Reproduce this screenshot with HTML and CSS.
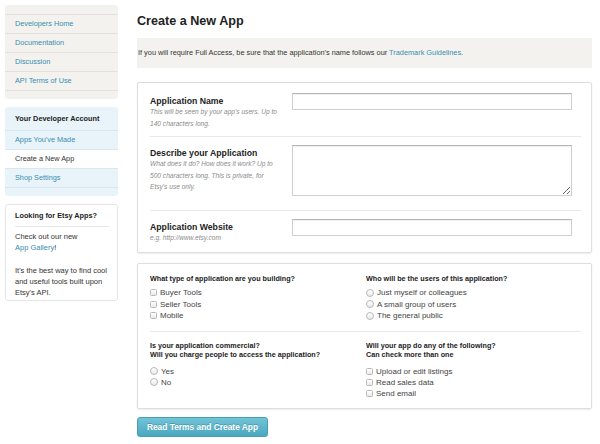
FILE: index.html
```html
<!DOCTYPE html>
<html lang="en">
<head>
<meta charset="utf-8">
<title>Create a New App</title>
<link rel="stylesheet" href="styles.css">
</head>
<body>
<div class="page">
  <aside class="sidebar">
    <nav class="box box-beige">
      <ul class="menu">
        <li><a href="#">Developers Home</a></li>
        <li><a href="#">Documentation</a></li>
        <li><a href="#">Discussion</a></li>
        <li><a href="#">API Terms of Use</a></li>
      </ul>
    </nav>
    <nav class="box box-blue">
      <div class="menu-title">Your Developer Account</div>
      <ul class="menu">
        <li><a href="#">Apps You've Made</a></li>
        <li class="current">Create a New App</li>
        <li><a href="#">Shop Settings</a></li>
      </ul>
    </nav>
    <div class="box box-white promo">
      <div class="promo-title">Looking for Etsy Apps?</div>
      <p class="promo-text">Check out our new<br><a href="#">App Gallery</a>!</p>
      <p class="promo-text">It's the best way to find cool and useful tools built upon Etsy's API.</p>
    </div>
  </aside>

  <main class="content">
    <h1 class="title">Create a New App</h1>
    <div class="notice">If you will require Full Access, be sure that the application's name follows our <a href="#">Trademark Guidelines</a>.</div>

    <form class="app-form">
      <div class="panel">
        <div class="field field-first">
          <div class="field-label">
            <div class="label">Application Name</div>
            <div class="hint">This will be seen by your app's users. Up to 140 characters long.</div>
          </div>
          <input class="text-input" type="text">
        </div>
        <div class="field field-mid">
          <div class="field-label">
            <div class="label">Describe your Application</div>
            <div class="hint">What does it do? How does it work? Up to 500 characters long. This is private, for Etsy's use only.</div>
          </div>
          <textarea class="text-area"></textarea>
        </div>
        <div class="field field-last">
          <div class="field-label">
            <div class="label">Application Website</div>
            <div class="hint">e.g. http://www.etsy.com</div>
          </div>
          <input class="text-input" type="text">
        </div>
      </div>

      <div class="panel panel-choices">
        <div class="choice-row row-one">
          <div class="choice-col">
            <div class="question">What type of application are you building?</div>
            <ul class="options opts-loose">
              <li><label><input type="checkbox" class="cb">Buyer Tools</label></li>
              <li><label><input type="checkbox" class="cb">Seller Tools</label></li>
              <li><label><input type="checkbox" class="cb">Mobile</label></li>
            </ul>
          </div>
          <div class="choice-col">
            <div class="question">Who will be the users of this application?</div>
            <ul class="options opts-loose">
              <li><label><input type="radio" name="users" class="rd">Just myself or colleagues</label></li>
              <li><label><input type="radio" name="users" class="rd">A small group of users</label></li>
              <li><label><input type="radio" name="users" class="rd">The general public</label></li>
            </ul>
          </div>
        </div>
        <div class="choice-row row-two">
          <div class="choice-col">
            <div class="question">Is your application commercial?<br>Will you charge people to access the application?</div>
            <ul class="options opts-tight">
              <li><label><input type="radio" name="commercial" class="rd">Yes</label></li>
              <li><label><input type="radio" name="commercial" class="rd">No</label></li>
            </ul>
          </div>
          <div class="choice-col">
            <div class="question">Will your app do any of the following?<br>Can check more than one</div>
            <ul class="options opts-tight">
              <li><label><input type="checkbox" class="cb">Upload or edit listings</label></li>
              <li><label><input type="checkbox" class="cb">Read sales data</label></li>
              <li><label><input type="checkbox" class="cb">Send email</label></li>
            </ul>
          </div>
        </div>
      </div>

      <button type="button" class="submit">Read Terms and Create App</button>
    </form>
  </main>
</div>
</body>
</html>
```

FILE: styles.css
```css
html, body {
  margin: 0;
  padding: 0;
  background: #fff;
}
body {
  font-family: "Liberation Sans", Arial, Helvetica, sans-serif;
  color: #333;
}
a {
  color: #3a8db0;
  text-decoration: none;
}

.page {
  display: flex;
  align-items: flex-start;
  gap: 19px;
  padding: 5px 0 0 5px;
}

/* Sidebar */
.sidebar {
  width: 113px;
  flex: none;
  display: flex;
  flex-direction: column;
  gap: 8px;
  font-size: 7.3px;
}
.box {
  border-radius: 3px;
}
.box-beige {
  background: #f3f2ee;
  padding: 9px 0 8px;
}
.box-blue {
  background: #e9f4fa;
  padding: 0 0 8px;
}
.box-white {
  background: #fff;
  border: 1px solid #e6e6e6;
  box-sizing: border-box;
}
.menu {
  list-style: none;
  margin: 0;
  padding: 0;
  border-bottom: 1px solid #e4e2dc;
}
.box-blue .menu {
  border-bottom-color: #d9e8f0;
}
.menu li {
  border-top: 1px solid #e4e2dc;
  line-height: 18px;
  padding-left: 10px;
}
.box-blue .menu li {
  border-top-color: #d9e8f0;
}
.menu li.current {
  background: #fff;
  color: #333;
}
.menu-title {
  font-weight: bold;
  color: #222;
  line-height: 23px;
  padding-left: 10px;
}
.promo {
  padding: 6px 4px 2px 9px;
}
.promo-title {
  font-weight: bold;
  color: #222;
  line-height: 10px;
  padding-bottom: 5px;
  margin-right: 4px;
  border-bottom: 1px solid #e6e6e6;
}
.promo-text {
  margin: 4px 0 0;
  line-height: 11px;
  font-size: 7.5px;
}
.promo-text + .promo-text {
  margin-top: 12px;
}

/* Main content */
.content {
  width: 455px;
  flex: none;
}
.title {
  margin: 0;
  padding-top: 9px;
  font-size: 12.6px;
  line-height: 14px;
  font-weight: bold;
  color: #222;
}
.notice {
  margin-top: 10px;
  background: #f3f2ee;
  height: 30px;
  line-height: 30px;
  font-size: 7.35px;
  padding-left: 1px;
  color: #333;
}
.app-form {
  margin: 14px 0 0;
}
.panel {
  border: 1px solid #dedede;
  border-radius: 2px;
  box-shadow: 0 1px 2px rgba(0, 0, 0, 0.08);
  padding: 0 10px 0 12px;
}
.field {
  display: grid;
  grid-template-columns: 142px 280px;
  align-items: start;
  border-bottom: 1px solid #e8e8e8;
}
.field-first { padding: 10px 0 7px; }
.field-mid { padding: 8px 0 14px; }
.field-last { padding: 8px 0 8px; border-bottom: 0; }
.field-label {
  margin-top: 3px;
  padding-right: 13px;
}
.label {
  font-size: 8.7px;
  font-weight: bold;
  line-height: 10px;
  color: #222;
}
.hint {
  font-size: 6.6px;
  font-style: italic;
  line-height: 11.5px;
  color: #8a8a8a;
}
.text-input,
.text-area {
  display: block;
  box-sizing: border-box;
  width: 280px;
  margin: 0;
  border: 1px solid #cfcfcf;
  border-top-color: #b4b4b4;
  background: #fff;
  box-shadow: inset 0 1px 1px rgba(0, 0, 0, 0.06);
  font: 7.2px "Liberation Sans", Arial, sans-serif;
}
.text-input {
  height: 17px;
}
.text-area {
  height: 51px;
  resize: vertical;
}

.panel-choices {
  margin-top: 10px;
}
.choice-row {
  display: grid;
  grid-template-columns: 216px 1fr;
}
.row-one {
  padding: 10px 0 9.5px;
  border-bottom: 1px solid #e8e8e8;
}
.row-two {
  padding: 8.5px 0 9px;
}
.question {
  font-size: 7.2px;
  font-weight: bold;
  line-height: 9px;
  color: #222;
}
.options {
  list-style: none;
  margin: 0;
  padding: 0;
  font-size: 8px;
  color: #444;
}
.opts-loose { margin-top: 4.5px; }
.opts-loose li { line-height: 11.5px; height: 11.5px; }
.opts-tight { margin-top: 7px; }
.opts-tight li { line-height: 11px; height: 11px; }
.options label {
  display: flex;
  align-items: center;
  height: 100%;
}
.cb,
.rd {
  -webkit-appearance: none;
  appearance: none;
  margin: 0 3px 0 0;
  flex: none;
  border: 1px solid #b9b9b9;
  background: linear-gradient(#ffffff, #e9e9e9);
  box-sizing: border-box;
}
.cb {
  width: 7px;
  height: 7px;
  border-radius: 1.5px;
}
.rd {
  width: 8px;
  height: 8px;
  border-radius: 50%;
}

.submit {
  display: block;
  margin-top: 8px;
  width: 131px;
  height: 20px;
  padding: 0;
  border: 1px solid #449fb7;
  border-radius: 3px;
  background: linear-gradient(#72c4d7, #4aa7bf);
  box-shadow: 0 1px 1px rgba(0, 0, 0, 0.15);
  color: #fff;
  font: bold 8.4px "Liberation Sans", Arial, sans-serif;
  text-shadow: 0 -1px 0 rgba(0, 0, 0, 0.2);
  cursor: pointer;
}
```
